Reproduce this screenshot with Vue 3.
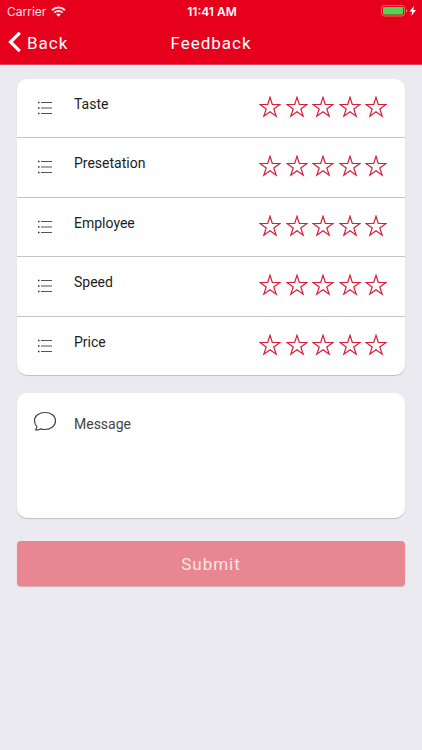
<script setup>
import { reactive, ref, computed } from 'vue'

const topics = ['Taste', 'Presetation', 'Employee', 'Speed', 'Price']
const ratings = reactive(Object.fromEntries(topics.map((topic) => [topic, 0])))
const message = ref('')
const complete = computed(() => topics.every((topic) => ratings[topic] > 0))
</script>

<template>
  <div class="screen">
    <header class="header">
      <div class="status">
        <div class="carrier">
          <span>Carrier</span>
          <svg width="15" height="11" viewBox="0 0 15 11" aria-hidden="true">
            <path d="M1 4.200a9.200 9.200 0 0 1 13 0M3.300 6.600a6 6 0 0 1 8.400 0" fill="none" stroke="currentColor" stroke-width="2" />
            <path d="M7.500 10.800 5.200 8.500a3.300 3.300 0 0 1 4.600 0z" fill="currentColor" />
          </svg>
        </div>
        <div class="clock">11:41 AM</div>
        <div class="power">
          <svg width="36" height="12" viewBox="0 0 36 12" aria-hidden="true">
            <rect x="0.500" y="0.500" width="23" height="10.500" rx="2.500" fill="none" stroke="#f0705f" />
            <rect x="2" y="2" width="20" height="7.500" rx="1" fill="#4cd656" />
            <path d="M25 4v3.500q1.400-.5 1.400-1.750T25 4z" fill="#f0705f" />
            <path d="M33 1l-4.500 5.500h2.600L30.300 11l4.700-6h-2.700z" fill="#fff" />
          </svg>
        </div>
      </div>
      <nav class="bar">
        <a class="back" href="#">
          <svg width="13" height="22" viewBox="0 0 13 22" aria-hidden="true">
            <path d="M11.800 .8 2.500 10l9.300 9.200" fill="none" stroke="currentColor" stroke-width="3.200" />
          </svg>
          <span>Back</span>
        </a>
        <h1 class="title">Feedback</h1>
      </nav>
    </header>

    <form class="form" @submit.prevent>
      <div class="card topics">
        <div
          v-for="topic in topics"
          :key="topic"
          class="topic"
          role="radiogroup"
          :aria-labelledby="'topic-' + topic"
        >
          <svg class="list" width="16" height="14" viewBox="0 0 16 14" aria-hidden="true">
            <path d="M4 1.500h11M4 7h11M4 12.500h11" stroke="#555" />
            <path d="M1 1.500h1.500M1 7h1.500M1 12.500h1.500" stroke="#333" stroke-width="1.500" />
          </svg>
          <span :id="'topic-' + topic" class="name">{{ topic }}</span>
          <div class="stars">
            <label v-for="n in 5" :key="n" class="star" :class="{ on: n <= ratings[topic] }">
              <input v-model="ratings[topic]" type="radio" :name="topic" :value="n" :aria-label="n + ' of 5'" />
              <svg viewBox="0 0 22 22" aria-hidden="true">
                <path d="M11 1.300 13.300 8.500H21L14.800 12.900 17.200 20.300 11 15.800 4.800 20.300 7.200 12.900 1 8.500H8.700z" />
              </svg>
            </label>
          </div>
        </div>
      </div>

      <div class="card note">
        <label for="message" class="bubble">
          <svg width="24" height="21" viewBox="0 0 24 21" role="img" aria-label="Message">
            <path
              d="M12 1.500C6 1.500 1.500 5 1.500 9.700c0 2.500 1.200 4.600 2.400 5.900-.2 1.300-.7 2.400-1.500 3.400 2 .1 3.600-.3 5-1.100 1.400.4 2.900.6 4.600.6 6 0 10.500-3.800 10.500-8.700S18 1.500 12 1.500z"
              fill="none" stroke="#444" stroke-width="1.200" stroke-linejoin="round"
            />
          </svg>
        </label>
        <textarea id="message" v-model="message" placeholder="Message"></textarea>
      </div>

      <button class="submit" type="submit" :disabled="!complete">Submit</button>
    </form>
  </div>
</template>

<style>
body {
  background: #ebeaf1;
}
</style>

<style scoped>
.screen {
  min-height: 100vh;
  background: #ebeaf1;
  color: #1c1c1c;
  font-family: Roboto, "Liberation Sans", sans-serif;
  font-size: 14px;
}
.header {
  background: #e6001c;
  border-bottom: 1px solid #d9455a;
  color: #fff;
}
.status {
  display: grid;
  grid-template-columns: 1fr auto 1fr;
  align-items: center;
  height: 22px;
  padding: 0 5px 0 7px;
  font-family: Inter, sans-serif;
  font-size: 12px;
}
.carrier {
  display: flex;
  align-items: center;
  gap: 5px;
  color: #ffe3e6;
}
.clock {
  font-weight: 600;
}
.power {
  display: flex;
  justify-content: flex-end;
}
.bar {
  display: grid;
  grid-template-columns: 1fr auto 1fr;
  align-items: center;
  height: 42px;
  padding: 0 8px;
}
.back {
  display: flex;
  align-items: center;
  gap: 6px;
  color: #fff;
  font-size: 17px;
  letter-spacing: 1px;
  text-decoration: none;
}
.title {
  margin: 0;
  font-size: 17px;
  font-weight: 400;
  letter-spacing: 1px;
}
.form {
  display: flex;
  flex-direction: column;
  gap: 18px;
  padding: 14px 17px;
}
.card {
  border-radius: 10px;
  background: #fff;
  box-shadow: 0 1px 1px #bdbdc2;
}
.topics {
  display: flex;
  flex-direction: column;
  min-height: 296px;
}
.topic {
  display: flex;
  flex: 1;
  align-items: flex-start;
  box-sizing: border-box;
  padding: 17px 18px 0 20px;
  border-bottom: 1px solid #c4c4c8;
}
.topic:last-child {
  border-bottom: 0;
}
.list {
  margin: 5px 21px 0 0;
}
.name {
  flex: 1;
  line-height: 17px;
}
.stars {
  display: flex;
  justify-content: space-between;
  width: 128px;
}
.star {
  display: flex;
  cursor: pointer;
}
.star input {
  appearance: none;
  width: 0;
  height: 0;
  margin: 0;
}
.star svg {
  width: 22px;
  height: 22px;
  fill: none;
  stroke: #d81e38;
  stroke-width: 1.2;
}
.star.on svg {
  fill: #d81e38;
}
.note {
  display: flex;
  align-items: flex-start;
  gap: 17px;
  padding: 18px 16px 0;
}
.bubble {
  display: flex;
}
textarea {
  flex: 1;
  min-width: 0;
  height: 107px;
  box-sizing: border-box;
  padding: 5px 0;
  border: 0;
  outline: 0;
  background: transparent;
  color: #1c1c1c;
  font: inherit;
  line-height: 17px;
  resize: none;
}
textarea::placeholder {
  color: #444;
  opacity: 1;
}
.submit {
  height: 45px;
  margin-top: 5px;
  border: 0;
  border-radius: 4px;
  background: #e6001c;
  box-shadow: 0 1px 1px #d9a9b3;
  color: #fff;
  font: inherit;
  font-size: 17px;
  letter-spacing: 1px;
}
.submit:disabled {
  background: #e88791;
  color: #fae3e6;
}
</style>
